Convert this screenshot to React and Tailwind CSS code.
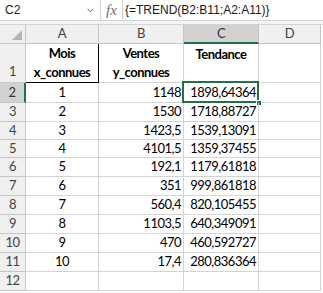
import React from "react";

const COLS = ["A", "B", "C", "D"];
const DATA = [
  ["1", "1148", "1898,64364"],
  ["2", "1530", "1718,88727"],
  ["3", "1423,5", "1539,13091"],
  ["4", "4101,5", "1359,37455"],
  ["5", "192,1", "1179,61818"],
  ["6", "351", "999,861818"],
  ["7", "560,4", "820,105455"],
  ["8", "1103,5", "640,349091"],
  ["9", "470", "460,592727"],
  ["10", "17,4", "280,836364"],
];
const HEIGHTS = ["h-[20px]", "h-[19px]", "h-[18px]", "h-[18px]", "h-[19px]", "h-[19px]", "h-[19px]", "h-[19px]", "h-[19px]", "h-[19px]", "h-[19px]"];

const grid = "grid grid-cols-[26px_73px_85px_75px_62px]";
const cell = "border-r border-b border-[#d4d4d4] flex items-center";
const head = "border-r border-b border-[#c6c6c6] bg-[#f0f0f0] text-[#444] flex items-center justify-center";

export default function App() {
  return (
    <div className="w-[323px] h-[293px] bg-white overflow-hidden font-['Lato',sans-serif] text-[13px] tracking-[-0.5px] text-black">
      {/* formula bar */}
      <div className="flex h-[21px] border-b border-[#d4d4d4] font-['Liberation_Sans',sans-serif] text-[12px] tracking-normal">
        <div className="w-[101px] border-r border-[#d4d4d4] flex items-center pl-[5px] pr-[6px]">
          <span className="flex-1 text-[#222]">C2</span>
          <svg width="7" height="5" viewBox="0 0 7 5" className="text-[#666]">
            <path d="M0.5 0.8 L3.5 3.8 L6.5 0.8" fill="none" stroke="currentColor" strokeWidth="1" />
          </svg>
        </div>
        <div className="w-[22px] border-r border-[#d4d4d4] flex items-center justify-center font-['Liberation_Serif',serif] italic text-[15px] text-[#707070]">
          fx
        </div>
        <div className="flex items-center pl-[2px] text-[#1a1a1a]">{"{=TREND(B2:B11;A2:A11)}"}</div>
      </div>
      <div className="h-[4px] bg-[#f3f3f3] border-b border-[#d4d4d4]" />

      {/* column headers */}
      <div className={grid}>
        <div className={`${head} h-[19px] relative`}>
          <svg width="10" height="10" viewBox="0 0 10 10" className="absolute right-[3px] bottom-[3px]">
            <polygon points="10,0 10,10 0,10" fill="#b4b4b4" />
          </svg>
        </div>
        {COLS.map((c) => (
          <div
            key={c}
            className={
              c === "C"
                ? "h-[19px] border-r border-b-2 border-r-[#c6c6c6] border-b-[#217346] bg-[#d2d2d2] text-[#333] flex items-center justify-center"
                : `${head} h-[19px]`
            }
          >
            {c}
          </div>
        ))}
      </div>

      {/* row 1 */}
      <div className={grid}>
        <div className={`${head} h-[39px] items-end pb-[1px]`}>1</div>
        <div className="h-[39px] border-r border-b border-black flex flex-col items-center justify-end font-bold leading-[19px]">
          <span>Mois</span>
          <span>x_connues</span>
        </div>
        <div className={`${cell} h-[39px] flex-col justify-end font-bold leading-[19px]`}>
          <span>Ventes</span>
          <span>y_connues</span>
        </div>
        <div className={`${cell} h-[39px] flex-col justify-start pt-[1px] font-bold leading-[19px]`}>
          <span>Tendance</span>
        </div>
        <div className={`${cell} h-[39px]`} />
      </div>

      {/* data rows */}
      {DATA.map((r, i) => {
        const h = HEIGHTS[i];
        const active = i === 0;
        return (
          <div key={i} className={grid}>
            <div
              className={
                active
                  ? `${h} border-b border-r-2 border-b-[#c6c6c6] border-r-[#217346] bg-[#d2d2d2] text-[#333] flex items-center justify-center`
                  : `${head} ${h}`
              }
            >
              {i + 2}
            </div>
            <div className={`${cell} ${h} justify-center`}>{r[0]}</div>
            <div className={`${cell} ${h} justify-end pr-[2px]`}>{r[1]}</div>
            <div className={`${cell} ${h} justify-end pr-[2px] relative`}>
              {r[2]}
              {active && (
                <>
                  <div className="absolute -left-[2px] -top-[2px] -right-[1px] -bottom-[1px] border-2 border-[#217346]" />
                  <div className="absolute -right-[4px] -bottom-[4px] w-[6px] h-[6px] bg-[#217346] border border-white" />
                </>
              )}
            </div>
            <div className={`${cell} ${h}`} />
          </div>
        );
      })}
      <div className={grid}>
        <div className={`${head} h-[19px]`}>12</div>
        <div className={`${cell} h-[19px]`} />
        <div className={`${cell} h-[19px]`} />
        <div className={`${cell} h-[19px]`} />
        <div className={`${cell} h-[19px]`} />
      </div>
    </div>
  );
}
